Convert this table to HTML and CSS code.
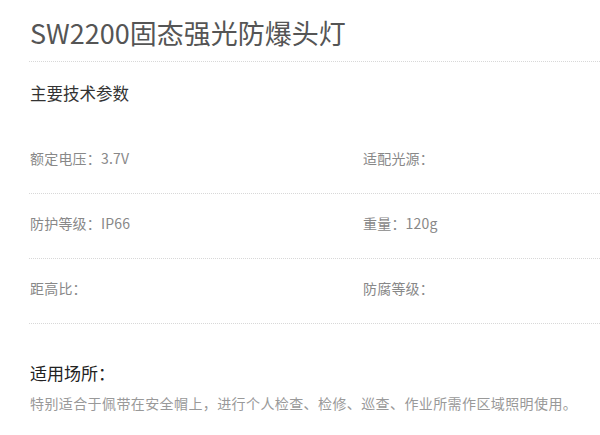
FILE: index.html
```html
<!DOCTYPE html>
<html lang="zh-CN">
<head>
    <meta charset="UTF-8">
    <meta name="viewport" content="width=device-width, initial-scale=1.0">
    <title>SW2200固态强光防爆头灯</title>
    <link rel="stylesheet" href="styles.css">
</head>
<body>
    <div class="product">
        <h1 class="product-title">SW2200固态强光防爆头灯</h1>

        <div class="section-head">主要技术参数</div>

        <div class="spec-row">
            <div class="spec-item">额定电压：3.7V</div>
            <div class="spec-item">适配光源：</div>
        </div>
        <div class="spec-row">
            <div class="spec-item">防护等级：IP66</div>
            <div class="spec-item">重量：120g</div>
        </div>
        <div class="spec-row">
            <div class="spec-item">距高比：</div>
            <div class="spec-item">防腐等级：</div>
        </div>

        <div class="usage">
            <div class="usage-head">适用场所：</div>
            <div class="usage-text">特别适合于佩带在安全帽上，进行个人检查、检修、巡查、作业所需作区域照明使用。</div>
        </div>
    </div>
</body>
</html>
```

FILE: styles.css
```css
body {
    margin: 0;
    background-color: #fff;
    font-family: "Noto Sans CJK SC", "Noto Sans", sans-serif;
}
.product {
    padding-left: 29px;
}
.product-title {
    margin: 0;
    padding: 15px 0 10px 1px;
    font-size: 27px;
    line-height: 36px;
    font-weight: 400;
    color: #555;
    border-bottom: 1px dotted #d8d8d8;
}
.section-head {
    margin: 19px 0 24px 1px;
    font-size: 16.5px;
    line-height: 24px;
    color: #333;
}
.spec-row {
    display: grid;
    grid-template-columns: 333px 1fr;
    padding: 19px 0 25px 1px;
    border-bottom: 1px dotted #d8d8d8;
}
.spec-item {
    font-size: 14px;
    line-height: 20px;
    color: #888;
    letter-spacing: 0.2px;
}
.usage {
    padding: 37px 0 22px 1px;
    border-bottom: 1px dotted #d8d8d8;
}
.usage-head {
    font-size: 17px;
    line-height: 24px;
    color: #222;
    margin-bottom: 8px;
}
.usage-text {
    font-size: 14px;
    line-height: 20px;
    color: #999;
    letter-spacing: 0.4px;
}
```
